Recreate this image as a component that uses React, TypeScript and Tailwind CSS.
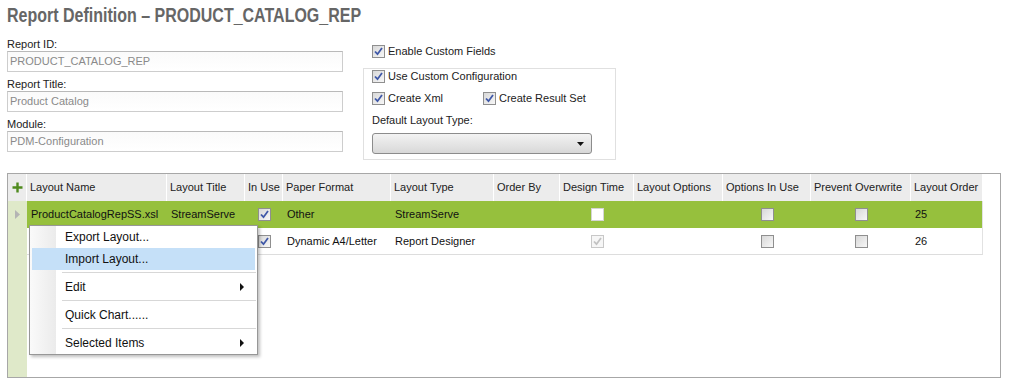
import React from 'react';

const FONT = { fontFamily: '"Liberation Sans", Arial, sans-serif' };

const Check = ({ checked = false, variant = 'normal' }: { checked?: boolean; variant?: 'normal' | 'white' | 'disabled' }) => {
  const box =
    variant === 'white'
      ? 'border-[#d4d4d4] bg-white'
      : variant === 'disabled'
      ? 'border-[#c8c8c8] bg-[#f6f6f6]'
      : 'border-[#8f8f8f] bg-gradient-to-br from-[#d8d8d8] to-[#f7f7f7]';
  return (
    <span className={`inline-flex w-[13px] h-[13px] border items-center justify-center shrink-0 ${box}`}>
      {checked && (
        <svg width="9" height="9" viewBox="0 0 9 9">
          <path
            d="M1 4.5 L3.5 7.2 L8 1"
            fill="none"
            stroke={variant === 'disabled' ? '#c2c2c2' : '#3f58a8'}
            strokeWidth="1.8"
          />
        </svg>
      )}
    </span>
  );
};

const Field = ({ label, value }: { label: string; value: string }) => (
  <div className="flex flex-col">
    <div className="h-[13px] leading-[13px] text-[11px] text-[#222]">{label}</div>
    <div className="h-[21px] w-[336px] border border-[#cdcdcd] border-t-[#b9b9b9] bg-gradient-to-b from-[#fafafa] to-white pl-[2px] text-[11px] leading-[19px] text-[#8a8a8a]">
      {value}
    </div>
  </div>
);

const CheckLabel = ({ label }: { label: string }) => (
  <div className="flex items-center gap-[3px] h-[13px] text-[11px] text-[#222]">
    <Check checked />
    <span>{label}</span>
  </div>
);

const cols = [
  { name: 'Layout Name', w: 140 },
  { name: 'Layout Title', w: 78 },
  { name: 'In Use', w: 38 },
  { name: 'Paper Format', w: 108 },
  { name: 'Layout Type', w: 103 },
  { name: 'Order By', w: 66 },
  { name: 'Design Time', w: 74 },
  { name: 'Layout Options', w: 89 },
  { name: 'Options In Use', w: 88 },
  { name: 'Prevent Overwrite', w: 100 },
  { name: 'Layout Order', w: 72 },
];

type Row = {
  name: string;
  title: string;
  paper: string;
  type: string;
  design: 'white' | 'disabled';
  order: string;
  selected: boolean;
};

// second row's name/title sit under the context menu
const rows: Row[] = [
  { name: 'ProductCatalogRepSS.xsl', title: 'StreamServe', paper: 'Other', type: 'StreamServe', design: 'white', order: '25', selected: true },
  { name: '', title: '', paper: 'Dynamic A4/Letter', type: 'Report Designer', design: 'disabled', order: '26', selected: false },
];

const Cell = ({ w, children, center = false }: { w: number; children?: React.ReactNode; center?: boolean }) => (
  <div
    style={{ width: w }}
    className={`shrink-0 h-full flex items-center overflow-hidden whitespace-nowrap ${center ? 'justify-center' : 'pl-[4px]'}`}
  >
    {children}
  </div>
);

const MenuItem = ({ label, active = false, sub = false }: { label: string; active?: boolean; sub?: boolean }) => (
  <div className={`h-[22px] mx-[2px] flex items-center pl-[33px] pr-[10px] text-[12px] text-[#111] ${active ? 'bg-[#c5e0f8]' : ''}`}>
    <span className="flex-1">{label}</span>
    {sub && (
      <svg width="5" height="8" viewBox="0 0 5 8">
        <path d="M0 0 L4 4 L0 8 Z" fill="#111" />
      </svg>
    )}
  </div>
);

const Sep = () => (
  <div className="h-[6px] flex items-center pl-[32px] pr-[1px]">
    <div className="w-full h-[2px] border-t border-[#d7d7d7] border-b border-b-white" />
  </div>
);

export default function App() {
  return (
    <div className="relative w-[1010px] h-[385px] bg-white overflow-hidden px-[7px]" style={FONT}>
      <div className="h-[38px] pt-[2px] whitespace-nowrap">
        <span className="inline-block origin-left scale-x-[0.8] text-[20px] font-bold text-[#666] leading-[26px]">
          Report Definition – PRODUCT_CATALOG_REP
        </span>
      </div>

      <div className="flex">
        <div className="flex flex-col gap-[6px] w-[336px]">
          <Field label="Report ID:" value="PRODUCT_CATALOG_REP" />
          <Field label="Report Title:" value="Product Catalog" />
          <Field label="Module:" value="PDM-Configuration" />
        </div>

        <div className="ml-[20px] flex flex-col">
          <div className="pl-[9px] pt-[7px]">
            <CheckLabel label="Enable Custom Fields" />
          </div>
          <div className="mt-[10px] w-[253px] h-[92px] border border-[#e0e0e0] pl-[8px] pt-[1px] flex flex-col">
            <CheckLabel label="Use Custom Configuration" />
            <div className="flex mt-[9px]">
              <div className="w-[111px]">
                <CheckLabel label="Create Xml" />
              </div>
              <CheckLabel label="Create Result Set" />
            </div>
            <div className="mt-[9px] h-[13px] leading-[13px] text-[11px] text-[#222]">Default Layout Type:</div>
            <div className="mt-[6px] w-[220px] h-[21px] rounded-[3px] border border-[#8c8c8c] bg-gradient-to-b from-[#f3f3f3] to-[#d8d8d8] flex items-center justify-end pr-[7px]">
              <svg width="7" height="4" viewBox="0 0 7 4">
                <path d="M0 0 L7 0 L3.5 4 Z" fill="#111" />
              </svg>
            </div>
          </div>
        </div>
      </div>

      {/* grid */}
      <div className="mt-[13px] w-[994px] h-[205px] border border-[#a7a7a7] flex flex-col text-[11px] text-[#111]">
        <div className="h-[27px] flex shrink-0">
          <div className="w-[19px] bg-[#ececec] border-r border-white flex items-center justify-center">
            <svg width="11" height="11" viewBox="0 0 11 11">
              <path d="M5.5 0.5 V10.5 M0.5 5.5 H10.5" stroke="#4f8a1e" strokeWidth="2.4" />
            </svg>
          </div>
          {cols.map((c) => (
            <div
              key={c.name}
              style={{ width: c.w }}
              className="shrink-0 bg-[#ececec] border-r border-white flex items-center pl-[3px] whitespace-nowrap overflow-hidden text-[#222]"
            >
              {c.name}
            </div>
          ))}
        </div>

        {rows.map((r) => (
          <div key={r.order} className="h-[27px] flex shrink-0">
            <div className="w-[19px] bg-[#dfe9c9] flex items-center justify-center">
              {r.selected && (
                <svg width="5" height="9" viewBox="0 0 5 9">
                  <path d="M0 0 L5 4.5 L0 9 Z" fill="#b4b4b4" />
                </svg>
              )}
            </div>
            <div
              className={`flex w-[956px] border-r border-[#e2e2e2] ${
                r.selected ? 'bg-[#96c03d]' : 'bg-white border-b border-b-[#dddddd]'
              }`}
            >
              <Cell w={140}>{r.name}</Cell>
              <Cell w={78}>{r.title}</Cell>
              <Cell w={38} center>
                <Check checked />
              </Cell>
              <Cell w={108}>{r.paper}</Cell>
              <Cell w={103}>{r.type}</Cell>
              <Cell w={66} />
              <Cell w={74} center>
                <Check checked={r.design === 'disabled'} variant={r.design} />
              </Cell>
              <Cell w={89} />
              <Cell w={88} center>
                <Check />
              </Cell>
              <Cell w={100} center>
                <Check />
              </Cell>
              <Cell w={72}>{r.order}</Cell>
            </div>
          </div>
        ))}

        <div className="flex-1 flex">
          <div className="w-[19px] bg-[#dfe9c9]" />
          <div className="flex-1 bg-white" />
        </div>
      </div>

      {/* context menu */}
      <div className="absolute left-[29px] top-[225px] w-[229px] border border-[#979797] bg-white shadow-[2px_2px_3px_rgba(0,0,0,0.25)] text-[12px]">
        <div className="absolute left-0 top-0 bottom-0 w-[26px] bg-gradient-to-r from-[#fafafa] to-[#ebebeb]" />
        <div className="relative">
          <MenuItem label="Export Layout..." />
          <MenuItem label="Import Layout..." active />
          <Sep />
          <MenuItem label="Edit" sub />
          <Sep />
          <MenuItem label="Quick Chart......" />
          <Sep />
          <MenuItem label="Selected Items" sub />
        </div>
      </div>
    </div>
  );
}
